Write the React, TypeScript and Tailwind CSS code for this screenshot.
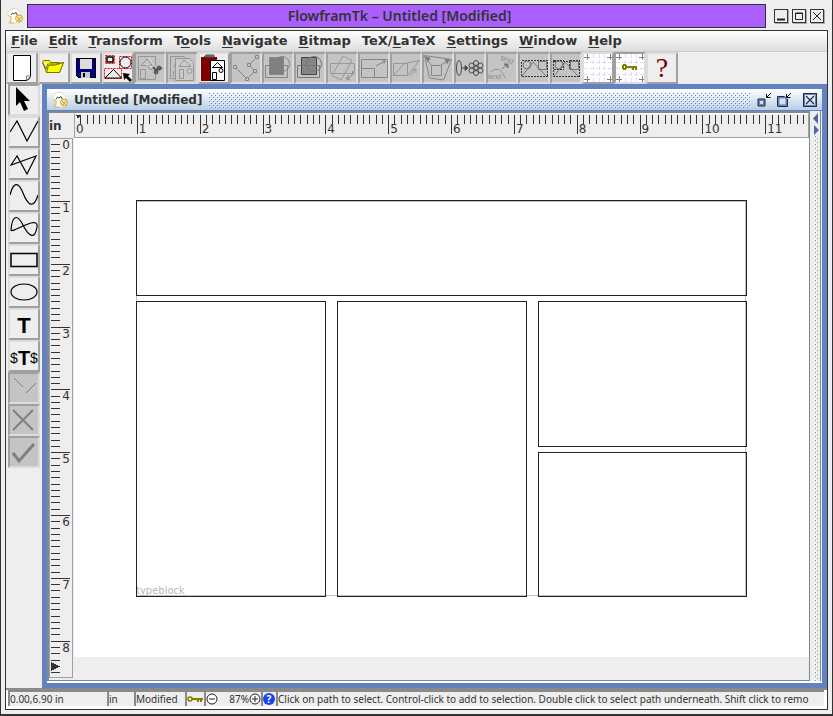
import type { ReactNode } from "react";

const PITCH = 62.84;

const menus: { before: string; key: string; after: string }[] = [
  { before: "", key: "F", after: "ile" },
  { before: "", key: "E", after: "dit" },
  { before: "", key: "T", after: "ransform" },
  { before: "T", key: "o", after: "ols" },
  { before: "", key: "N", after: "avigate" },
  { before: "", key: "B", after: "itmap" },
  { before: "TeX/", key: "L", after: "aTeX" },
  { before: "", key: "S", after: "ettings" },
  { before: "", key: "W", after: "indow" },
  { before: "", key: "H", after: "elp" },
];

function Glyph({ children, stroke = "#000", smooth = true }: { children: ReactNode; stroke?: string; smooth?: boolean }) {
  return (
    <svg
      viewBox="0 0 28 28"
      className="block size-7"
      fill="none"
      stroke={stroke}
      strokeWidth="1"
      shapeRendering={smooth ? "auto" : "crispEdges"}
      aria-hidden="true"
    >
      {children}
    </svg>
  );
}

const GREY = "#868686";

function GridCrosses() {
  return (
    <>
      <rect width="28" height="28" fill="#fff" stroke="none" />
      <path d="M9.5 0v28M15.5 0v28M20.5 0v28M0 8.5h28M0 14.5h28M0 20.5h28" stroke="#dcdcfa" strokeDasharray="4 2" />
      <path d="M3.5 0v6M0 3.5h6M26.5 0v6M23 3.5h5M3.5 22v6M0 25.5h6M26.5 22v6M23 25.5h5" stroke="#808080" />
    </>
  );
}

type Tool = { name: string; off?: boolean; pressed?: boolean; icon: ReactNode };

const toolbar: Tool[] = [
  {
    name: "New",
    icon: (
      <Glyph>
        <path d="M5.5 1.5h17v21q-1 3-4 4h-13z" fill="#fff" />
        <path d="M22.500 22l-4 0v4" stroke="#777" />
      </Glyph>
    ),
  },
  {
    name: "Open",
    icon: (
      <Glyph>
        <path d="M2.500 8.500l1-2h6l1 2h9v3" fill="#ffff00" stroke="#777700" />
        <path d="M2.500 8.500l4 10h13l4-10-8 1.500h-8l-1 5z" fill="#ffff00" stroke="#777700" />
        <path d="M6.500 18.500l2-7 7-.5 8-2.500-4 10z" fill="#ffff00" stroke="#777700" />
      </Glyph>
    ),
  },
  {
    name: "Save",
    icon: (
      <Glyph smooth={false}>
        <path d="M4.500 4.500h19v19h-17l-2-2z" fill="#000080" />
        <rect x="8" y="5" width="12" height="10" fill="#dcdcdc" stroke="none" />
        <rect x="9" y="18" width="9" height="6" fill="#c8c8c8" stroke="none" />
        <rect x="11" y="19" width="2" height="4" fill="#000" stroke="none" />
      </Glyph>
    ),
  },
  {
    name: "Select all",
    icon: (
      <Glyph>
        <path d="M1.500 1.500h9v8h-9zM15.500 2.500h12v12h-12zM.5 14.500h17v10h-17z" stroke="#f00" strokeDasharray="2 1" />
        <path d="M3 3h6v5h-6z" strokeWidth="1.500" />
        <circle cx="21.500" cy="8.500" r="5.500" />
        <path d="M1 24l8.500-8.500 8 8.500z" />
        <path d="M19 19l7 1-2 2 4 4-2 2-4-4-2 2z" fill="#000" stroke="none" />
      </Glyph>
    ),
  },
  {
    name: "Cut",
    off: true,
    icon: (
      <Glyph stroke="#969696">
        <path d="M2.500 2.500h17v9M2.500 2.500v23h17v-6M5 11.500l6-6.500 6 6.500zM4.500 15.500h5v9h-5z" />
        <circle cx="15" cy="13" r="2.500" />
        <path d="M13 3l6 12M10 10l10 5" stroke="#e0e0e0" />
        <circle cx="20" cy="18" r="2" fill="#666" stroke="#555" />
        <circle cx="23" cy="14" r="2" fill="#666" stroke="#555" />
        <path d="M17 13l3 3 6-2" stroke="#555" strokeWidth="2" />
      </Glyph>
    ),
  },
  {
    name: "Copy",
    off: true,
    icon: (
      <Glyph stroke="#969696">
        <path d="M8.500 24.500h-6v-22h13l3 3M5.500 13l4-6M5.500 16.500v6" />
        <path d="M7.500 4.500h14l4 4v18h-18z" fill="#cacaca" />
        <path d="M11 12.500l5-6.500 7 6.500zM11.500 15.500h4v9h-4z" />
        <circle cx="21.500" cy="17" r="2.500" />
      </Glyph>
    ),
  },
  {
    name: "Paste",
    icon: (
      <Glyph>
        <path d="M1 3h16v24h-16z" fill="#800000" stroke="none" />
        <path d="M4 3h10v-2h-8z" fill="#777" stroke="#555" />
        <path d="M10.500 6.500h14v20h-14z" fill="#fff" />
        <path d="M12.500 13.500l5-5 5 5zM12.500 18.500h4v7h-4z" />
        <circle cx="21" cy="16.500" r="2" />
      </Glyph>
    ),
  },
  {
    name: "Edit path",
    off: true,
    icon: (
      <Glyph stroke={GREY}>
        <path d="M3 13l12 12 8-8-6-6 8-8" />
        <path d="M1.500 11.500h3v3h-3zM13.500 23.500h3v3h-3zM21.500 15.500h3v3h-3zM15.500 9.500h3v3h-3zM23.500 1.500h3v3h-3z" fill="#c4c4c4" />
      </Glyph>
    ),
  },
  {
    name: "Move to front",
    off: true,
    icon: (
      <Glyph stroke={GREY}>
        <path d="M1.500 11.500h22v12h-22z" />
        <circle cx="18" cy="10" r="7.500" />
        <path d="M5.500 3.500h14v17h-14z" fill="#808080" />
      </Glyph>
    ),
  },
  {
    name: "Move to back",
    off: true,
    icon: (
      <Glyph stroke="#777">
        <path d="M5.500 3.500h15v17h-15z" fill="#868686" stroke="#444" />
        <path d="M1.500 11.500h22v12h-22z" />
        <circle cx="18" cy="10" r="7.500" />
      </Glyph>
    ),
  },
  {
    name: "Rotate",
    off: true,
    icon: (
      <Glyph stroke="#999">
        <path d="M2.500 9.500h24v10h-24zM15 2l9 4.500-11 19.500-9-4.500z" />
        <path d="M24.500 17q1 6-6 7.500M21 21l-3 3.500 4 1.500" stroke={GREY} />
      </Glyph>
    ),
  },
  {
    name: "Scale",
    off: true,
    icon: (
      <Glyph stroke={GREY}>
        <path d="M1.500 5.500h26v18h-26zM1.500 14.500h13v9h-13zM16 12l9-5M22 7h3.500l-2 3" />
      </Glyph>
    ),
  },
  {
    name: "Shear",
    off: true,
    icon: (
      <Glyph stroke="#969696">
        <path d="M1.500 9.500h14v12h-14zM1.500 21.500l11-12 15-3-12 15M18 22l6-7M20 16.500l4-1.500v4" />
      </Glyph>
    ),
  },
  {
    name: "Distort",
    off: true,
    icon: (
      <Glyph stroke={GREY}>
        <path d="M.5 1.500l27 4-8 20.500-14-2zM7.500 11.500h10v10h-10zM7 11l-5-8M17 11l8-5" />
        <path d="M1.500 2.500l5 2-3 3zM26 5.500l-5 0 2 4z" fill="#777" />
      </Glyph>
    ),
  },
  {
    name: "Convert to path",
    off: true,
    icon: (
      <Glyph stroke="#4a4a4a">
        <ellipse cx="3" cy="14" rx="2.500" ry="7.500" />
        <path d="M6 14h5M9 11.500l3 2.500-3 2.500z" fill="#4a4a4a" />
        <circle cx="20" cy="14" r="2" />
        <circle cx="20" cy="9" r="2.500" />
        <circle cx="20" cy="19" r="2.500" />
        <circle cx="15.500" cy="11.500" r="2.500" />
        <circle cx="24.500" cy="11.500" r="2.500" />
        <circle cx="15.500" cy="16.500" r="2.500" />
        <circle cx="24.500" cy="16.500" r="2.500" />
      </Glyph>
    ),
  },
  {
    name: "Text along path",
    off: true,
    icon: (
      <Glyph stroke="#969696">
        <path d="M2 18q10-8 15 6" />
        <path d="M14 15l5-5M16 10h4v4z" fill="#777" stroke="#777" />
        <text x="0" y="25" fontSize="9" fontFamily="Liberation Serif, serif" fill="#888" stroke="none">text</text>
        <text x="12" y="6" fontSize="9" fontFamily="Liberation Serif, serif" fill="#888" stroke="none" transform="rotate(20 12 6)">text</text>
      </Glyph>
    ),
  },
  {
    name: "Group",
    off: true,
    icon: (
      <Glyph stroke="#777" smooth={false}>
        <path d="M1.500 6.500h26v16h-26z" stroke="#333" strokeDasharray="2 1" />
        <g shapeRendering="auto">
          <circle cx="7" cy="11" r="4" />
          <path d="M18.500 7.500h8v8h-8zM2 22l11-14 13 14" />
        </g>
      </Glyph>
    ),
  },
  {
    name: "Ungroup",
    off: true,
    icon: (
      <Glyph stroke="#777" smooth={false}>
        <path d="M1.500 6.500h10v9h-10zM17.500 6.500h10v9h-10zM1.500 7.500h26v15h-26z" stroke="#333" strokeDasharray="2 1" />
        <g shapeRendering="auto">
          <circle cx="7" cy="11" r="4" />
          <path d="M18.500 7.500h8v8h-8zM2 22l11-14 13 14" />
        </g>
      </Glyph>
    ),
  },
  { name: "Show grid", icon: <Glyph smooth={false}><GridCrosses /></Glyph> },
  {
    name: "Lock grid",
    pressed: true,
    icon: (
      <Glyph smooth={false}>
        <GridCrosses />
        <path d="M6 11h1v-1h3v1h1v1h10v4h-2v-2h-1v2h-2v-2h-5v1h-1v1h-3v-1h-1zM8 12v2h1v-2z" fill="#808000" fillRule="evenodd" stroke="none" />
      </Glyph>
    ),
  },
  { name: "Help", icon: <span className="block w-7 text-center font-['Liberation_Serif',serif] text-[28px] leading-7 text-[#800000]">?</span> },
];

const tools: Tool[] = [
  { name: "Select", pressed: true, icon: <Glyph><path d="M6 1v19l4-4 4 9 4-2-4-8h6z" fill="#000" stroke="none" /></Glyph> },
  { name: "Open line path", icon: <Glyph><path d="M0 14l7-11 10 20 11-20" strokeWidth="1.200" /></Glyph> },
  { name: "Closed line path", icon: <Glyph><path d="M7 6l-6 9 25-9-9 18z" strokeWidth="1.200" /></Glyph> },
  { name: "Open curve path", icon: <Glyph><path d="M0 13C3 1 8-2 13 11S24 27 28 13" strokeWidth="1.200" /></Glyph> },
  { name: "Closed curve path", icon: <Glyph><path d="M1 16C2 2 7-1 13 11S25 26 27 13 2 20 1 16z" strokeWidth="1.200" /></Glyph> },
  { name: "Rectangle", icon: <Glyph><path d="M1 7.500h26v13h-26z" strokeWidth="1.500" /></Glyph> },
  { name: "Ellipse", icon: <Glyph><ellipse cx="14" cy="14" rx="13" ry="8" strokeWidth="1.200" /></Glyph> },
  { name: "Text", icon: <span className="block text-center font-['Liberation_Sans',sans-serif] text-[22px] leading-8 font-bold">T</span> },
  {
    name: "Math",
    icon: (
      <span className="-mx-1 flex items-center justify-center font-['Liberation_Sans',sans-serif] text-[14px] leading-8">
        $<b className="text-[20px]">T</b>$
      </span>
    ),
  },
  { name: "Gap", off: true, icon: <Glyph stroke="#808080"><path d="M4 4l9 9M26 9L16 19" /></Glyph> },
  { name: "Abandon path", off: true, icon: <Glyph stroke="#808080"><path d="M3 4l20 20M23 4L3 24" strokeWidth="2" /></Glyph> },
  { name: "Finish path", off: true, icon: <Glyph stroke="#808080"><path d="M3 15l6 8L24 6" strokeWidth="3" /></Glyph> },
];

function ToolButton({ tool }: { tool: Tool }) {
  const look = tool.off
    ? "border-t-[#a0a0a0] border-l-[#a0a0a0] border-r-[#dcdcdc] border-b-[#dcdcdc] bg-[#c4c4c4]"
    : tool.pressed
      ? "border-t-[#a0a0a0] border-l-[#a0a0a0] border-r-[#dcdcdc] border-b-[#dcdcdc] bg-[#eee]"
      : "border-t-[#dcdcdc] border-l-[#dcdcdc] border-r-[#a0a0a0] border-b-[#a0a0a0] bg-[#eee]";
  return (
    <button type="button" disabled={tool.off} aria-label={tool.name} className={`size-8 shrink-0 overflow-hidden border-2 text-black ${look}`}>
      {tool.icon}
    </button>
  );
}

function AppIcon() {
  return (
    <svg viewBox="0 0 16 16" className="size-4 shrink-0" fill="none" aria-hidden="true">
      <path d="M.5 7C1 2 5 0 8 .5s6 3 6 7l-1 7.500H4V9z" fill="#fff" stroke="#e6dcae" />
      <path d="M4 7l1.500-2 1.500 1 2-1.500 1.500 3" stroke="#444" />
      <path d="M1 7.500l3 1v3l-2 3.500h5" stroke="#e0b84a" />
      <circle cx="12" cy="10.500" r="3.500" fill="#f8e6a6" stroke="#cfa53a" />
      <path d="M9.500 8.500l4 4M14 9l-3 4" stroke="#c99a2c" />
    </svg>
  );
}

function FrameButton({ name, children }: { name: string; children: ReactNode }) {
  return (
    <button type="button" aria-label={name} className="size-[14px] border border-[#333] shadow-[1px_1px_0_#aaa]">
      <svg viewBox="0 0 12 12" className="block size-3" fill="none" stroke="#222" aria-hidden="true">{children}</svg>
    </button>
  );
}

function Bumps({ id, color }: { id: string; color: string }) {
  return (
    <svg className="block size-full" shapeRendering="crispEdges" aria-hidden="true">
      <defs>
        <pattern id={id} width="4" height="4" patternUnits="userSpaceOnUse">
          <rect width="1" height="1" fill="#fff" />
          <rect x="2" y="2" width="1" height="1" fill="#fff" />
          <rect x="1" y="1" width="1" height="1" fill={color} />
          <rect x="3" y="3" width="1" height="1" fill={color} />
        </pattern>
      </defs>
      <rect width="100%" height="100%" fill={`url(#${id})`} />
    </svg>
  );
}

function TopRuler() {
  const ticks = Array.from({ length: 116 }, (_, i) => i + 1);
  return (
    <svg className="block size-full font-['DejaVu_Sans',sans-serif] text-[12px]" shapeRendering="crispEdges" aria-hidden="true">
      {ticks.map((i) => (
        <rect key={i} x={Math.round((i * PITCH) / 10 - 1)} y="1" width="1" height={i % 10 ? 9 : 19} fill="#333" />
      ))}
      <path d="M1 1h5l-3 4z" fill="#333" />
      {Array.from({ length: 12 }, (_, i) => (
        <text key={i} x={i * PITCH + 1} y="19" fill="#333">{i}</text>
      ))}
    </svg>
  );
}

function SideRuler() {
  const ticks = Array.from({ length: 85 }, (_, i) => i + 1);
  return (
    <svg className="block size-full font-['DejaVu_Sans',sans-serif] text-[12px]" shapeRendering="crispEdges" aria-hidden="true">
      {ticks.map((i) => (
        <rect key={i} x="1" y={Math.round((i * PITCH) / 10 - 1)} width={i % 10 ? 9 : 19} height="1" fill="#333" />
      ))}
      <path d="M1 523l9 4.500-9 4.500z" fill="#333" />
      {Array.from({ length: 9 }, (_, i) => (
        <text key={i} x="20" y={i * PITCH + 10} textAnchor="end" fill="#333">{i}</text>
      ))}
    </svg>
  );
}

const frames = [
  { x: 62, y: 63, w: 610, h: 95 },
  { x: 62, y: 164, w: 189, h: 295 },
  { x: 263, y: 164, w: 189, h: 295 },
  { x: 464, y: 164, w: 208, h: 145 },
  { x: 464, y: 315, w: 208, h: 144 },
];

function Canvas() {
  return (
    <svg className="block size-full bg-white" role="img" aria-label="Page layout">
      <rect x="62.500" y="63.500" width="609" height="394" fill="none" stroke="#c0c0c0" />
      <text x="62" y="456" className="font-['DejaVu_Sans',sans-serif] text-[10px]" fill="#b8b8b8">typeblock</text>
      {frames.map((f) => (
        <rect key={`${f.x}-${f.y}`} x={f.x + 0.5} y={f.y - 0.5} width={f.w} height={f.h} fill="none" stroke="#222" />
      ))}
    </svg>
  );
}

const cell = "flex h-4 shrink-0 items-center overflow-hidden border-t-2 border-l-2 border-[#8a8a8a] bg-[#eee] whitespace-nowrap";

export default function App() {
  return (
    <div className="flex h-screen flex-col border-x border-b-2 border-[#333] bg-[#eee] px-1 pb-1 font-['DejaVu_Sans',sans-serif] text-[#333]">
      <header className="flex h-[30px] shrink-0 items-center pt-[2px] pr-1">
        <span className="w-[22px] shrink-0 pl-[2px]"><AppIcon /></span>
        <h1 className="h-6 flex-1 border border-[#333] bg-[#ac5fff] pl-[6px] text-center font-['Noto_Sans',sans-serif] text-[14px] leading-[22px] font-semibold">
          FlowframTk – Untitled [Modified]
        </h1>
        <div className="flex gap-1 pl-2">
          <FrameButton name="Minimize"><path d="M2 9.500h8" strokeWidth="2" /></FrameButton>
          <FrameButton name="Maximize"><path d="M2.500 3h7v6.500h-7zM2 3.500h8" /></FrameButton>
          <FrameButton name="Close"><path d="M2 2l8 8M10 2l-8 8" /></FrameButton>
        </div>
      </header>

      <div className="flex min-h-0 flex-1 flex-col border border-[#333]">
        <nav className="flex h-[21px] shrink-0 items-center gap-px border-b border-[#ccc] bg-linear-to-b from-white to-[#dedede] text-[13px] leading-4 font-bold">
          {menus.map((m) => (
            <button key={m.key + m.after} type="button" className="px-[5px] font-bold">
              {m.before}
              <span className="underline underline-offset-2">{m.key}</span>
              {m.after}
            </button>
          ))}
        </nav>

        <div className="flex h-8 shrink-0" role="toolbar" aria-label="Main tools">
          {toolbar.map((t) => <ToolButton key={t.name} tool={t} />)}
        </div>

        <div className="flex min-h-0 flex-1">
          <div className="flex w-9 shrink-0 flex-col pl-[2px]" role="toolbar" aria-label="Drawing tools">
            {tools.map((t) => <ToolButton key={t.name} tool={t} />)}
          </div>

          <section className="flex min-w-0 flex-1 flex-col border-5 border-[#6382bf] bg-[#eee]">
            <div className="flex h-[22px] shrink-0 items-center gap-[6px] border-b border-[#6382bf] bg-linear-to-b from-white to-[#b8cfe5] pr-[5px] pl-[5px]">
              <AppIcon />
              <h2 className="text-[12px] leading-4 font-bold whitespace-nowrap">Untitled [Modified]</h2>
              <div className="h-4 min-w-0 flex-1"><Bumps id="title-bumps" color="#6382bf" /></div>
              <div className="flex items-center gap-[6px]">
                {["Iconify", "Restore"].map((name, i) => (
                  <button key={name} type="button" aria-label={name}>
                    <svg viewBox="0 0 14 14" className="block size-[14px]" fill="none" stroke="#111" aria-hidden="true">
                      {i === 0 ? (
                        <>
                          <path d="M2 7h5v5h-5z" stroke="#6382bf" strokeWidth="2" />
                          <path d="M1 13V6h7v7z" stroke="#222c44" />
                        </>
                      ) : (
                        <>
                          <path d="M1.500 4.500h8v8h-8z" stroke="#6382bf" strokeWidth="2" />
                          <path d="M.5 13V3.500h7M10.500 6v7.500H.5" stroke="#222c44" />
                        </>
                      )}
                      <path d="M14 0l-4 4M9.500 1v3.500h4" />
                    </svg>
                  </button>
                ))}
                <button type="button" aria-label="Close document" className="ml-[6px]">
                  <svg viewBox="0 0 14 14" className="block size-[14px]" fill="none" stroke="#222c44" aria-hidden="true">
                    <path d="M1.500 1.500h11v11h-11z" stroke="#6382bf" />
                    <path d="M.5.5h13v13h-13zM3 3l8 8M11 3l-8 8" strokeWidth="1.200" />
                  </svg>
                </button>
              </div>
            </div>

            <div className="flex min-h-0 flex-1 border-b-2 border-white">
              <div className="grid min-w-0 flex-1 grid-cols-[25px_1fr] grid-rows-[25px_1fr] border-t-2 border-r border-b border-l-2 border-[#7a8a99]">
                <div className="flex items-center text-[12px] leading-4 font-bold">in</div>
                <div className="overflow-hidden border border-[#a0a0a0] border-t-white"><TopRuler /></div>
                <div className="mr-px mb-[2px] overflow-hidden border border-[#a0a0a0]"><SideRuler /></div>
                <div className="flex min-h-0 flex-col">
                  <div className="min-h-0 flex-1"><Canvas /></div>
                  <div className="h-[23px] shrink-0" />
                </div>
              </div>
              <div className="mr-px flex w-[11px] shrink-0 flex-col border-r border-[#7a8a99] pl-[2px]">
                <svg viewBox="0 0 8 24" className="block h-6 w-2" fill="#4a69a8" aria-hidden="true">
                  <path d="M6 2v11L1 7.500zM2 14v10l5-5z" />
                </svg>
                <div className="min-h-0 flex-1 px-[2px]"><Bumps id="split-bumps" color="#7a8a99" /></div>
              </div>
            </div>
          </section>
        </div>

        <footer className="flex h-[21px] shrink-0 items-start border-t-2 border-[#8a8a8a] bg-white pl-[2px] font-['Noto_Sans',sans-serif] text-[10px] leading-3">
          <div className={`${cell} w-[99px]`}>0.00,6.90 in</div>
          <div className={`${cell} w-[27px]`}>in</div>
          <div className={`${cell} w-[51px]`}>Modified</div>
          <div className={`${cell} w-[19px]`}>
            <svg viewBox="0 0 16 8" className="block h-2 w-4" fill="none" stroke="#808000" strokeWidth="2" aria-label="Grid locked">
              <circle cx="3" cy="4" r="2" strokeWidth="1.500" />
              <path d="M5 4h11M11 4v3M14 4v3" />
            </svg>
          </div>
          <div className={`${cell} w-[57px] justify-between`}>
            <button type="button" aria-label="Zoom out">
              <svg viewBox="0 0 12 12" className="block size-3" fill="#fff" stroke="#222" aria-hidden="true"><circle cx="6" cy="6" r="5" /><path d="M3 6h6" /></svg>
            </button>
            <span className="ml-auto">87%</span>
            <button type="button" aria-label="Zoom in">
              <svg viewBox="0 0 12 12" className="block size-3" fill="#fff" stroke="#222" aria-hidden="true"><circle cx="6" cy="6" r="5" /><path d="M3 6h6M6 3v6" /></svg>
            </button>
          </div>
          <button type="button" aria-label="Status help" className={`${cell} w-[15px]`}>
            <span className="size-3 rounded-full bg-[#1a44f0] text-center text-[10px] leading-3 font-bold text-white">?</span>
          </button>
          <div className="mr-[3px] h-4 min-w-0 flex-1 overflow-hidden border-t-2 border-l-2 border-[#8a8a8a] bg-[#eee] leading-[14px] whitespace-nowrap">
            Click on path to select. Control-click to add to selection. Double click to select path underneath. Shift click to remo
          </div>
        </footer>
      </div>
    </div>
  );
}
